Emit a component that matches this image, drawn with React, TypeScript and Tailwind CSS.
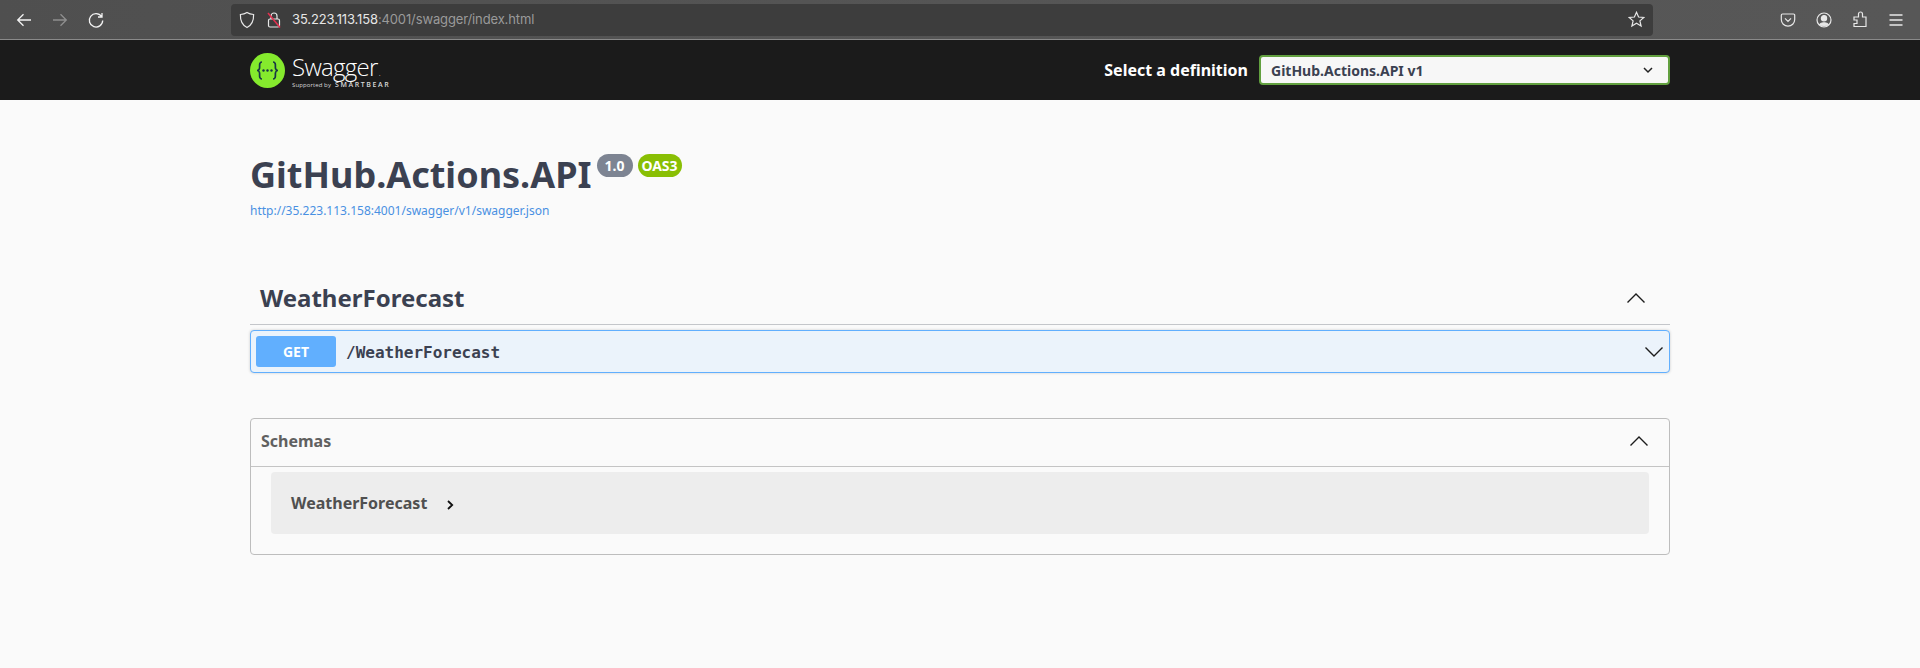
import React from "react";

const sans = "font-['Noto_Sans','Open_Sans',sans-serif]";

function Chevron({ up, className }: { up?: boolean; className?: string }) {
  return (
    <svg className={className} width="18" height="10" viewBox="0 0 18 10" fill="none" stroke="#1c1c1c" strokeWidth="1.4">
      <path d={up ? "M0.5 9.5 L9 1 L17.5 9.5" : "M0.5 0.5 L9 9 L17.5 0.5"} />
    </svg>
  );
}

function BrowserBar() {
  return (
    <div className="h-[40px] flex items-center border-b border-[#8a8a8a] bg-gradient-to-r from-[#4f4f4f] via-[#555555] to-[#575757]">
      {/* nav buttons */}
      <div className="w-[231px] flex items-center pl-[15px] gap-[18px] shrink-0">
        <svg width="18" height="18" viewBox="0 0 18 18" fill="none" stroke="#f2f2f2" strokeWidth="1.3">
          <path d="M16 9 H3 M8.5 3.2 L2.7 9 L8.5 14.8" />
        </svg>
        <svg width="18" height="18" viewBox="0 0 18 18" fill="none" stroke="#8f8f8f" strokeWidth="1.3">
          <path d="M2 9 H15 M9.5 3.2 L15.3 9 L9.5 14.8" />
        </svg>
        <svg width="18" height="18" viewBox="0 0 18 18" fill="none" stroke="#f2f2f2" strokeWidth="1.3">
          <path d="M14.5 5.5 A6.7 6.7 0 1 0 15.7 9.5 M15 2 V6 H11" />
        </svg>
      </div>
      {/* url bar */}
      <div className="w-[1422px] h-[32px] rounded-[4px] bg-[#3d3d3d] flex items-center shrink-0">
        <svg className="ml-[8px]" width="16" height="18" viewBox="0 0 16 18" fill="none" stroke="#e8e8e8" strokeWidth="1.2">
          <path d="M8 1.5 C10 2.8 12.5 3.4 14.6 3.5 C14.8 9.5 12.6 14.2 8 16.5 C3.4 14.2 1.2 9.5 1.4 3.5 C3.5 3.4 6 2.8 8 1.5 Z" />
        </svg>
        <svg className="ml-[12px]" width="14" height="18" viewBox="0 0 14 18" fill="none" strokeWidth="1.2">
          <path d="M4 8 V5 A3 3 0 0 1 10 5 V8" stroke="#e8e8e8" />
          <rect x="1.5" y="8" width="11" height="8" rx="1.5" stroke="#e8e8e8" />
          <path d="M1 2 L13 16.5" stroke="#e2304f" strokeWidth="1.6" />
        </svg>
        <div className="ml-[11px] font-['Inter',sans-serif] text-[13px] tracking-[-0.13px] whitespace-nowrap">
          <span className="text-[#e6e6e6]">35.223.113.158</span>
          <span className="text-[#9a9a9a]">:4001/swagger/index.html</span>
        </div>
        <svg className="ml-auto mr-[8px]" width="17" height="17" viewBox="0 0 17 17" fill="none" stroke="#e8e8e8" strokeWidth="1.2">
          <path d="M8.5 1.3 L10.6 6 L15.8 6.5 L11.9 9.9 L13.1 15 L8.5 12.3 L3.9 15 L5.1 9.9 L1.2 6.5 L6.4 6 Z" />
        </svg>
      </div>
      {/* toolbar icons */}
      <div className="flex-1 flex items-center justify-end pr-[16px] gap-[20px]">
        <svg width="16" height="16" viewBox="0 0 16 16" fill="none" stroke="#e8e8e8" strokeWidth="1.2">
          <path d="M2.5 2 H13.5 A1.2 1.2 0 0 1 14.7 3.2 V7.5 A6.7 6.7 0 0 1 1.3 7.5 V3.2 A1.2 1.2 0 0 1 2.5 2 Z M5 6.3 L8 9.3 L11 6.3" />
        </svg>
        <svg width="16" height="16" viewBox="0 0 16 16" fill="none" stroke="#e8e8e8" strokeWidth="1.2">
          <circle cx="8" cy="8" r="7" />
          <circle cx="8" cy="6.2" r="2.6" fill="#e8e8e8" />
          <path d="M3.6 12.5 C5 10.2 11 10.2 12.4 12.5 C11 14.4 5 14.4 3.6 12.5 Z" fill="#e8e8e8" />
        </svg>
        <svg width="16" height="17" viewBox="0 0 16 17" fill="none" stroke="#e8e8e8" strokeWidth="1.2">
          <path d="M2 6 H6.5 V3 A2 2 0 0 1 10.5 3 V6 H14 V15.5 H2 V12.5 H5 V9 H2 Z" />
        </svg>
        <svg width="16" height="14" viewBox="0 0 16 14" fill="none" stroke="#e8e8e8" strokeWidth="1.3">
          <path d="M1.5 2 H14.5 M1.5 7 H14.5 M1.5 12 H14.5" />
        </svg>
      </div>
    </div>
  );
}

function SwaggerHeader() {
  return (
    <div className="h-[60px] bg-[#1b1b1b]">
      <div className="w-[1420px] h-full mx-auto flex items-center justify-between">
        <div className="flex items-center">
          <svg width="35" height="35" viewBox="0 0 35 35">
            <circle cx="17.5" cy="17.5" r="17.5" fill="#85ea2d" />
            <g fill="none" stroke="#173646" strokeWidth="1.7">
              <path d="M12 9 C8.5 9 10 14 9.5 15.5 C9.2 16.8 8 17.5 7 17.5 C8 17.5 9.2 18.2 9.5 19.5 C10 21 8.5 26 12 26" />
              <path d="M23 9 C26.5 9 25 14 25.5 15.5 C25.8 16.8 27 17.5 28 17.5 C27 17.5 25.8 18.2 25.5 19.5 C25 21 26.5 26 23 26" />
            </g>
            <circle cx="13.5" cy="17.5" r="1.2" fill="#173646" />
            <circle cx="17.5" cy="17.5" r="1.2" fill="#173646" />
            <circle cx="21.5" cy="17.5" r="1.2" fill="#173646" />
          </svg>
          <div className="ml-[7px] text-white font-['Open_Sans',sans-serif] leading-none">
            <div className="text-[24px] font-light tracking-[-0.7px] h-[27px] leading-[28px]">
              Swagger<span className="text-[8px] ml-[1px]">.</span>
            </div>
            <div className="flex items-baseline whitespace-nowrap mt-[1px] text-[#d8d8d8]">
              <span className="text-[6px] tracking-[0.1px]">Supported by</span>
              <span className="ml-[4px] text-[7px] font-semibold tracking-[1.6px]">SMARTBEAR</span>
            </div>
          </div>
        </div>
        <div className={`flex items-center ${sans}`}>
          <span className="text-white font-bold text-[16px] mr-[11px]">Select a definition</span>
          <div className="w-[411px] h-[30px] rounded-[4px] border-2 border-[#62a03f] bg-[#f7f7f7] flex items-center justify-between pl-[10px] pr-[15px]">
            <span className="text-[14px] font-bold text-[#3b4151]">GitHub.Actions.API v1</span>
            <svg width="10" height="7" viewBox="0 0 10 7" fill="none" stroke="#222" strokeWidth="1.5">
              <path d="M1 1 L5 5 L9 1" />
            </svg>
          </div>
        </div>
      </div>
    </div>
  );
}

export default function App() {
  return (
    <div className={`min-h-screen bg-[#fafafa] ${sans}`}>
      <BrowserBar />
      <SwaggerHeader />
      <div className="w-[1420px] mx-auto">
        {/* info */}
        <div className="pt-[52px]">
          <div className="flex items-start">
            <h2 className="text-[36px] leading-[45px] font-bold text-[#3b4151]">GitHub.Actions.API</h2>
            <span className="ml-[5px] mt-[2px] h-[23px] w-[36px] rounded-[12px] bg-[#7d8492] text-white text-[14px] font-bold flex items-center justify-center">1.0</span>
            <span className="ml-[5px] mt-[2px] h-[23px] w-[44px] rounded-[12px] bg-[#89bf04] text-white text-[14px] font-bold flex items-center justify-center">OAS3</span>
          </div>
          <div className="text-[12px] leading-[16px] text-[#4990e2] mt-[6px]">http://35.223.113.158:4001/swagger/v1/swagger.json</div>
        </div>

        {/* tag section */}
        <div className="mt-[55px] h-[51px] pb-[2px] border-b border-[#c4c6ca] flex items-center justify-between pl-[10px] pr-[25px]">
          <h3 className="text-[24px] font-bold text-[#3b4151]">WeatherForecast</h3>
          <Chevron up />
        </div>
        <div className="mt-[5px] h-[43px] rounded-[4px] border border-[#61affe] bg-[#ebf3fb] shadow-[0_0_3px_rgba(0,0,0,0.19)] flex items-center pl-[5px] pr-[6px]">
          <span className="w-[80px] h-[31px] rounded-[3px] bg-[#61affe] text-white text-[14px] font-bold flex items-center justify-center">GET</span>
          <span className="ml-[10px] pt-[2px] font-['DejaVu_Sans_Mono',monospace] text-[16px] font-bold text-[#3b4151]">/WeatherForecast</span>
          <Chevron className="ml-auto" />
        </div>

        {/* schemas */}
        <div className="mt-[45px] h-[137px] rounded-[4px] border border-[#bdbdbd]">
          <div className="h-[48px] pb-[3px] border-b border-[#c4c4c4] flex items-center justify-between pl-[10px] pr-[21px]">
            <span className="text-[16px] font-bold text-[#606060]">Schemas</span>
            <Chevron up />
          </div>
          <div className="mt-[5px] mx-[20px] h-[62px] rounded-[4px] bg-[#ededed] flex items-center pl-[20px]">
            <span className="text-[16px] font-bold text-[#505050]">WeatherForecast</span>
            <svg className="ml-[20px] mt-[3px]" width="7" height="10" viewBox="0 0 7 10" fill="none" stroke="#111" strokeWidth="1.8">
              <path d="M1 1 L5.2 5 L1 9" />
            </svg>
          </div>
        </div>
      </div>
    </div>
  );
}
